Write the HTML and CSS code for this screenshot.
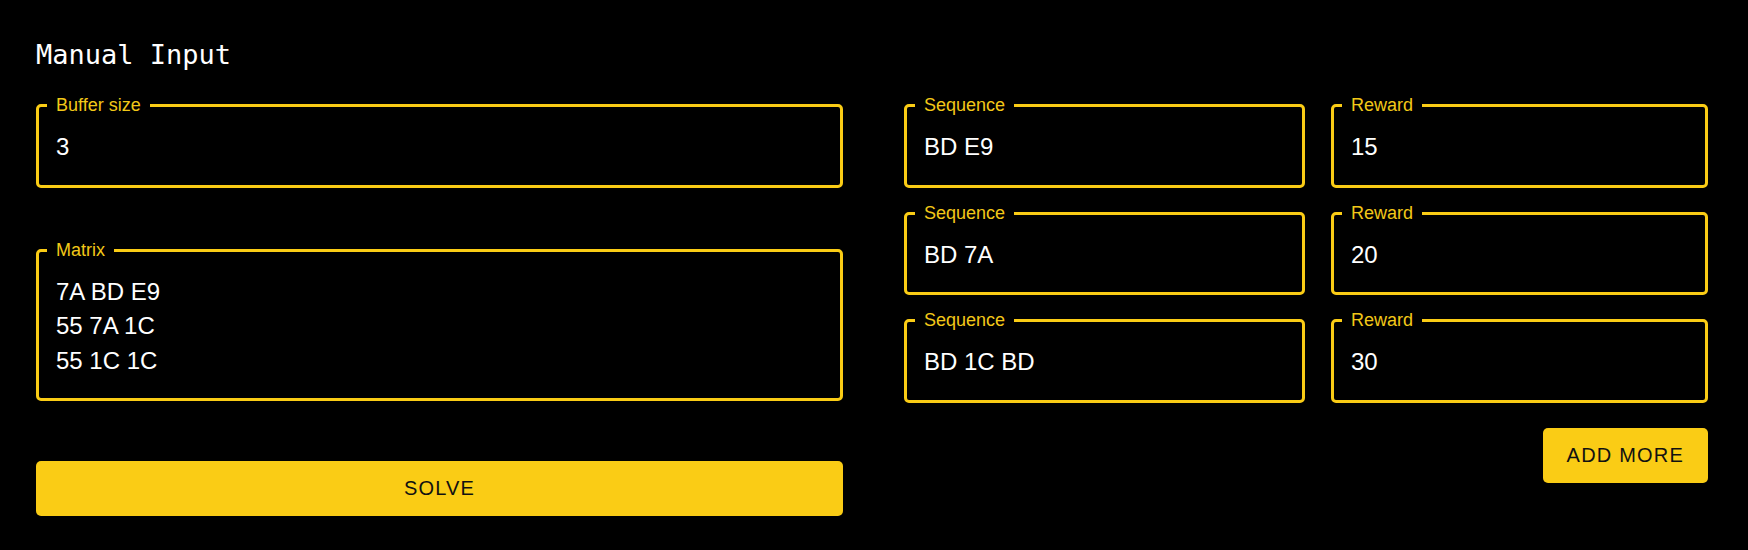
FILE: index.html
```html
<!DOCTYPE html>
<html lang="en">
<head>
<meta charset="utf-8">
<title>Manual Input</title>
<link rel="stylesheet" href="styles.css">
</head>
<body>
<main class="page">
  <h1 class="title">Manual Input</h1>
  <div class="layout">
    <section class="col-left">
      <fieldset class="field">
        <legend class="field-label">Buffer size</legend>
        <div class="field-value">3</div>
      </fieldset>
      <fieldset class="field field-matrix">
        <legend class="field-label">Matrix</legend>
        <div class="field-value">7A BD E9<br>55 7A 1C<br>55 1C 1C</div>
      </fieldset>
      <button class="btn btn-solve" type="button">SOLVE</button>
    </section>
    <section class="col-right">
      <div class="seq-grid">
        <fieldset class="field"><legend class="field-label">Sequence</legend><div class="field-value">BD E9</div></fieldset>
        <fieldset class="field"><legend class="field-label">Reward</legend><div class="field-value">15</div></fieldset>
        <fieldset class="field"><legend class="field-label">Sequence</legend><div class="field-value">BD 7A</div></fieldset>
        <fieldset class="field"><legend class="field-label">Reward</legend><div class="field-value">20</div></fieldset>
        <fieldset class="field"><legend class="field-label">Sequence</legend><div class="field-value">BD 1C BD</div></fieldset>
        <fieldset class="field"><legend class="field-label">Reward</legend><div class="field-value">30</div></fieldset>
      </div>
      <div class="actions">
        <button class="btn btn-add" type="button">ADD MORE</button>
      </div>
    </section>
  </div>
</main>
</body>
</html>
```

FILE: styles.css
```css
html, body {
  margin: 0;
  padding: 0;
  background: #000;
}

body {
  font-family: "Liberation Sans", Arial, sans-serif;
  color: #fff;
}

.page {
  padding: 39px 40px 0 36px;
}

.title {
  margin: 0 0 24px;
  font-family: "DejaVu Sans Mono", "Liberation Mono", monospace;
  font-weight: normal;
  font-size: 27px;
  line-height: 32px;
  color: #fff;
}

.layout {
  display: flex;
  gap: 61px;
  align-items: flex-start;
}

.col-left {
  width: 807px;
  display: flex;
  flex-direction: column;
}

.col-right {
  width: 804px;
  display: flex;
  flex-direction: column;
}

.field {
  margin: 0;
  padding: 0;
  min-width: 0;
  border: 3px solid #facc15;
  border-radius: 5px;
}

.field-label {
  margin-left: 8px;
  padding: 0 9px;
  font-size: 18px;
  line-height: 21px;
  color: #f2c818;
}

.field-value {
  padding: 14px 17px 20px;
  font-size: 24px;
  line-height: 34.5px;
  color: #fff;
}

.field-matrix {
  margin-top: 52px;
}

.btn {
  border: none;
  border-radius: 5px;
  background: #facc15;
  color: #111;
  font-family: "Liberation Sans", Arial, sans-serif;
  font-size: 20px;
  letter-spacing: 1.2px;
  height: 55px;
  cursor: pointer;
}

.btn-solve {
  margin-top: 60px;
  width: 100%;
}

.seq-grid {
  display: grid;
  grid-template-columns: 401px 377px;
  column-gap: 26px;
  row-gap: 15px;
}

.actions {
  margin-top: 25px;
  display: flex;
  justify-content: flex-end;
}

.btn-add {
  padding: 0 24px;
}
```
